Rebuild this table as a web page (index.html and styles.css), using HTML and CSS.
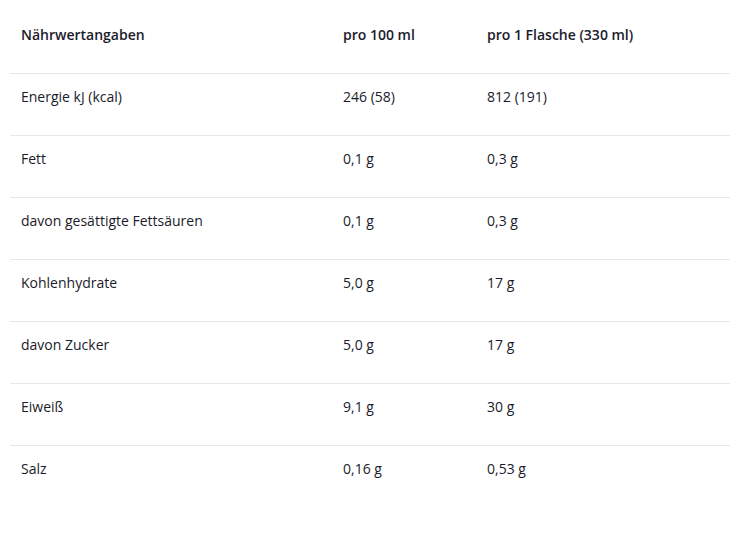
FILE: index.html
```html
<!DOCTYPE html>
<html lang="de">
<head>
<meta charset="utf-8">
<link rel="stylesheet" href="styles.css">
</head>
<body>
<table class="nutrition">
  <thead>
    <tr><th>Nährwertangaben</th><th>pro 100 ml</th><th>pro 1 Flasche (330 ml)</th></tr>
  </thead>
  <tbody>
    <tr><td>Energie kJ (kcal)</td><td>246 (58)</td><td>812 (191)</td></tr>
    <tr><td>Fett</td><td>0,1 g</td><td>0,3 g</td></tr>
    <tr><td>davon gesättigte Fettsäuren</td><td>0,1 g</td><td>0,3 g</td></tr>
    <tr><td>Kohlenhydrate</td><td>5,0 g</td><td>17 g</td></tr>
    <tr><td>davon Zucker</td><td>5,0 g</td><td>17 g</td></tr>
    <tr><td>Eiweiß</td><td>9,1 g</td><td>30 g</td></tr>
    <tr><td>Salz</td><td>0,16 g</td><td>0,53 g</td></tr>
  </tbody>
</table>
</body>
</html>
```
FILE: styles.css
```css
html, body {
  margin: 0;
  background: #ffffff;
}
body {
  padding: 12px 13px 0 10px;
  font-family: "Open Sans", "Liberation Sans", sans-serif;
  font-size: 14px;
  color: #1b1b2b;
}
.nutrition {
  width: 720px;
  border-collapse: collapse;
}
.nutrition th,
.nutrition td {
  text-align: left;
  vertical-align: top;
  padding: 14px 11px 29px;
  line-height: 18px;
  height: 18px;
}
.nutrition th {
  font-weight: 600;
}
.nutrition th:nth-child(1) { width: 300px; }
.nutrition th:nth-child(2) { width: 122px; }
.nutrition tbody tr,
.nutrition thead tr {
  border-bottom: 1px solid #e6e6e6;
}
.nutrition tbody tr:last-child {
  border-bottom: none;
}
```
